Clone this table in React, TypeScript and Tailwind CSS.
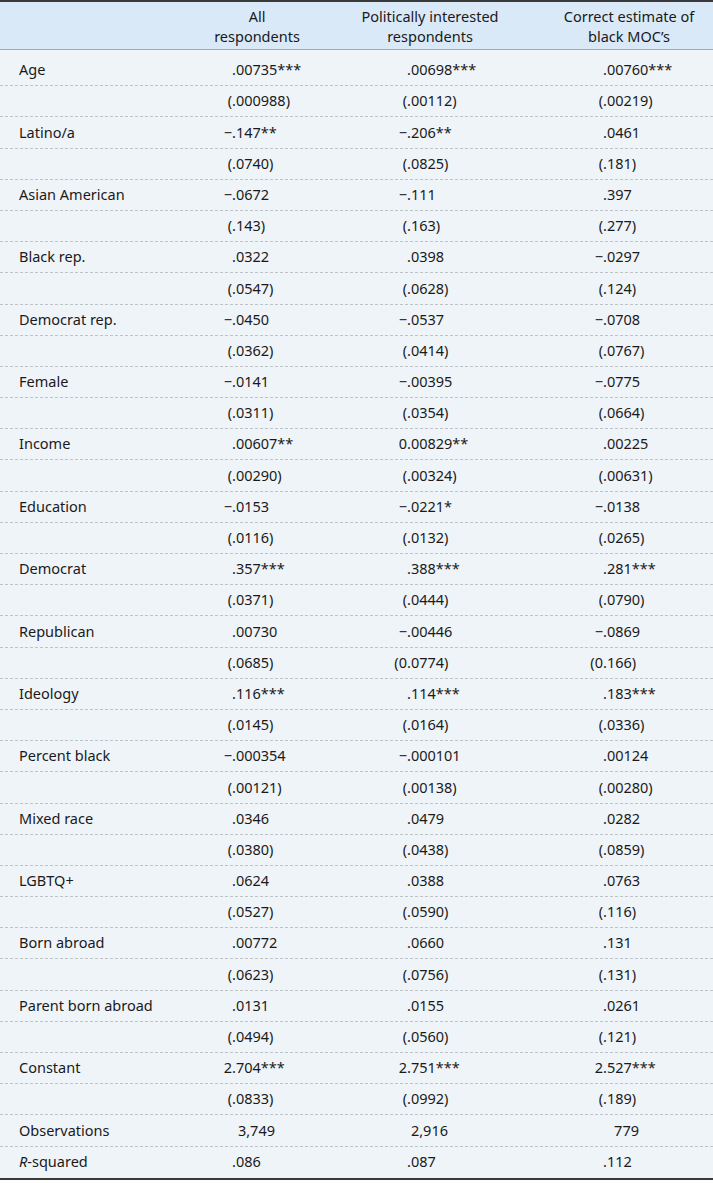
type Row = { label: string; vals: string[]; whole?: boolean };

const raw: [string, string[], string[]][] = [
  ["Age", [".00735***", ".00698***", ".00760***"], ["(.000988)", "(.00112)", "(.00219)"]],
  ["Latino/a", ["\u2212.147**", "\u2212.206**", ".0461"], ["(.0740)", "(.0825)", "(.181)"]],
  ["Asian American", ["\u2212.0672", "\u2212.111", ".397"], ["(.143)", "(.163)", "(.277)"]],
  ["Black rep.", [".0322", ".0398", "\u2212.0297"], ["(.0547)", "(.0628)", "(.124)"]],
  ["Democrat rep.", ["\u2212.0450", "\u2212.0537", "\u2212.0708"], ["(.0362)", "(.0414)", "(.0767)"]],
  ["Female", ["\u2212.0141", "\u2212.00395", "\u2212.0775"], ["(.0311)", "(.0354)", "(.0664)"]],
  ["Income", [".00607**", "0.00829**", ".00225"], ["(.00290)", "(.00324)", "(.00631)"]],
  ["Education", ["\u2212.0153", "\u2212.0221*", "\u2212.0138"], ["(.0116)", "(.0132)", "(.0265)"]],
  ["Democrat", [".357***", ".388***", ".281***"], ["(.0371)", "(.0444)", "(.0790)"]],
  ["Republican", [".00730", "\u2212.00446", "\u2212.0869"], ["(.0685)", "(0.0774)", "(0.166)"]],
  ["Ideology", [".116***", ".114***", ".183***"], ["(.0145)", "(.0164)", "(.0336)"]],
  ["Percent black", ["\u2212.000354", "\u2212.000101", ".00124"], ["(.00121)", "(.00138)", "(.00280)"]],
  ["Mixed race", [".0346", ".0479", ".0282"], ["(.0380)", "(.0438)", "(.0859)"]],
  ["LGBTQ+", [".0624", ".0388", ".0763"], ["(.0527)", "(.0590)", "(.116)"]],
  ["Born abroad", [".00772", ".0660", ".131"], ["(.0623)", "(.0756)", "(.131)"]],
  ["Parent born abroad", [".0131", ".0155", ".0261"], ["(.0494)", "(.0560)", "(.121)"]],
  ["Constant", ["2.704***", "2.751***", "2.527***"], ["(.0833)", "(.0992)", "(.189)"]],
];

const rows: Row[] = [];
raw.forEach(([label, est, se]) => {
  rows.push({ label, vals: est });
  rows.push({ label: "", vals: se });
});
rows.push({ label: "Observations", vals: ["3,749", "2,916", "779"], whole: true });
rows.push({ label: "R-squared", vals: [".086", ".087", ".112"] });

// decimal point offset inside each column, and right edge for whole numbers
const decW = ["w-[60px]", "w-[65px]", "w-[85px]"];
const wholeW = ["w-[103px]", "w-[106px]", "w-[121px]"];

function Value({ v, col, whole }: { v: string; col: number; whole?: boolean }) {
  if (whole) {
    return (
      <div className="flex">
        <span className={`${wholeW[col]} text-right`}>{v}</span>
      </div>
    );
  }
  const i = v.indexOf(".");
  return (
    <div className="flex whitespace-nowrap">
      <span className={`${decW[col]} text-right`}>{v.slice(0, i)}</span>
      <span>{v.slice(i)}</span>
    </div>
  );
}

export default function App() {
  return (
    <div
      className="w-[713px] bg-white text-[14.5px] text-[#1a1a1a]"
      style={{ fontFamily: '"Noto Sans", "Open Sans", sans-serif' }}
    >
      <div className="border-t-2 border-[#3a3a3a]">
        <div className="grid grid-cols-[172px_170px_176px_195px] h-[48px] items-center bg-[#d9e9f8] border-b border-[#a8a8a8] leading-[20px]">
          <div />
          <div className="text-center">
            All
            <br />
            respondents
          </div>
          <div className="text-center">
            Politically interested
            <br />
            respondents
          </div>
          <div className="text-center pl-[27px]">
            Correct estimate of
            <br />
            black MOC’s
          </div>
        </div>
        <div className="bg-[#eff4f9] pt-[5px] border-b-2 border-[#3a3a3a]">
          {rows.map((r, idx) => (
            <div
              key={idx}
              className={`grid grid-cols-[172px_170px_176px_195px] h-[31.2px] items-center ${
                idx < rows.length - 1 ? "border-b border-dashed border-[#bfc4c9]" : ""
              }`}
            >
              <div className="pl-[19px] whitespace-nowrap">
                {r.label === "R-squared" ? (
                  <>
                    <i>R</i>-squared
                  </>
                ) : (
                  r.label
                )}
              </div>
              {r.vals.map((v, c) => (
                <Value key={c} v={v} col={c} whole={r.whole} />
              ))}
            </div>
          ))}
        </div>
      </div>
    </div>
  );
}
